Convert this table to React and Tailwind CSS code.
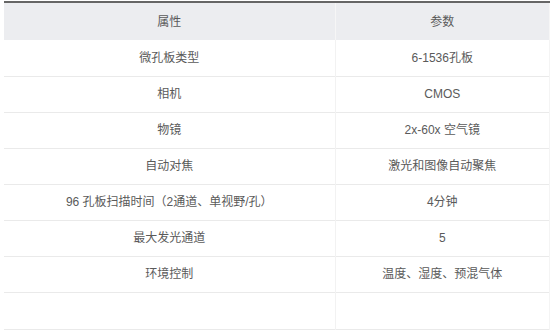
import React from "react";

const rows = [
  ["微孔板类型", "6-1536孔板"],
  ["相机", "CMOS"],
  ["物镜", "2x-60x 空气镜"],
  ["自动对焦", "激光和图像自动聚焦"],
  ["96 孔板扫描时间（2通道、单视野/孔）", "4分钟"],
  ["最大发光通道", "5"],
  ["环境控制", "温度、湿度、预混气体"],
  ["", ""],
];

export default function App() {
  return (
    <div className="w-[554px] h-[330px] bg-white pt-px pl-1 pr-[4px]">
      <table
        className="w-[546px] border-collapse text-[12px] text-[#5a5a5a]"
        style={{ fontFamily: '"Liberation Sans", "Noto Sans CJK SC", sans-serif' }}
      >
        <thead>
          <tr className="h-[38px] bg-[#ecedf0] border-t-2 border-[#666]">
            <th className="w-[331px] font-normal text-center border-r border-[#f6f6f6]">属性</th>
            <th className="font-normal text-center border-r border-[#f6f6f6]">参数</th>
          </tr>
        </thead>
        <tbody>
          {rows.map(([a, b], i) => (
            <tr key={i} className={`${i === rows.length - 1 ? "h-[37px]" : "h-[36px]"} border-b border-[#eaeaea]`}>
              <td className="text-center border-r border-[#f2f2f2]">{a}</td>
              <td className="text-center border-r border-[#f4f4f4]">{b}</td>
            </tr>
          ))}
        </tbody>
      </table>
    </div>
  );
}
